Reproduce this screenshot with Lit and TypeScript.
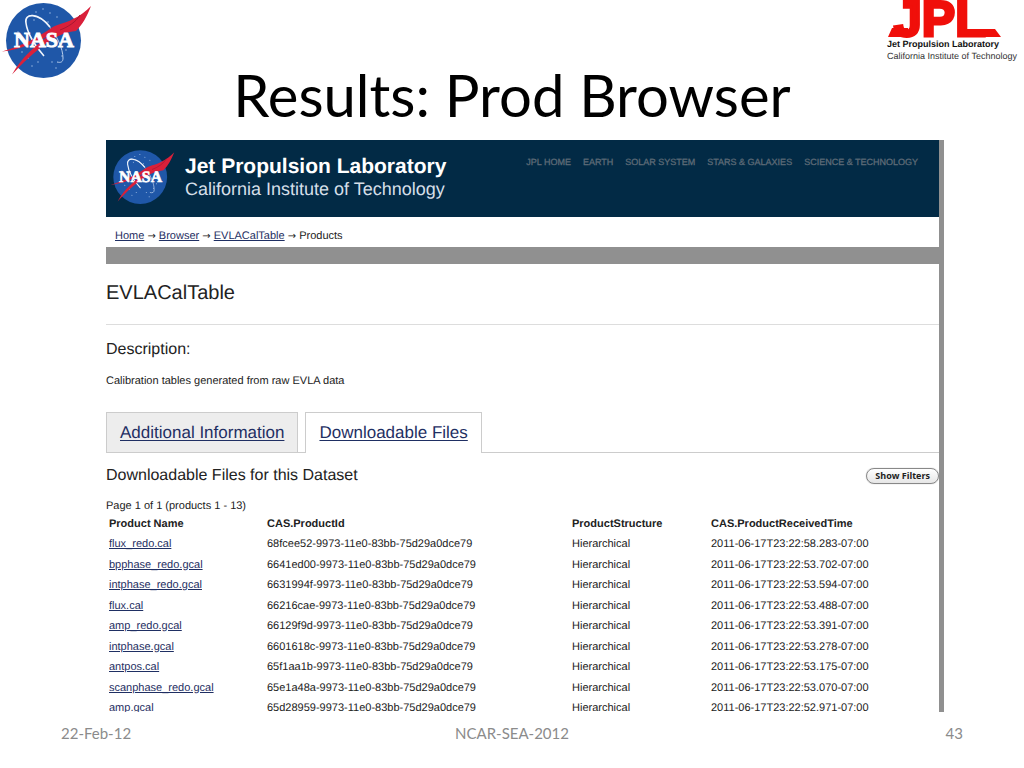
import { LitElement, html, css, svg } from "lit";
import { customElement, property } from "lit/decorators.js";

interface Product {
  name: string;
  id: string;
  time: string;
}

const PRODUCTS: Product[] = [
  { name: "flux_redo.cal", id: "68fcee52-9973-11e0-83bb-75d29a0dce79", time: "2011-06-17T23:22:58.283-07:00" },
  { name: "bpphase_redo.gcal", id: "6641ed00-9973-11e0-83bb-75d29a0dce79", time: "2011-06-17T23:22:53.702-07:00" },
  { name: "intphase_redo.gcal", id: "6631994f-9973-11e0-83bb-75d29a0dce79", time: "2011-06-17T23:22:53.594-07:00" },
  { name: "flux.cal", id: "66216cae-9973-11e0-83bb-75d29a0dce79", time: "2011-06-17T23:22:53.488-07:00" },
  { name: "amp_redo.gcal", id: "66129f9d-9973-11e0-83bb-75d29a0dce79", time: "2011-06-17T23:22:53.391-07:00" },
  { name: "intphase.gcal", id: "6601618c-9973-11e0-83bb-75d29a0dce79", time: "2011-06-17T23:22:53.278-07:00" },
  { name: "antpos.cal", id: "65f1aa1b-9973-11e0-83bb-75d29a0dce79", time: "2011-06-17T23:22:53.175-07:00" },
  { name: "scanphase_redo.gcal", id: "65e1a48a-9973-11e0-83bb-75d29a0dce79", time: "2011-06-17T23:22:53.070-07:00" },
  { name: "amp.gcal", id: "65d28959-9973-11e0-83bb-75d29a0dce79", time: "2011-06-17T23:22:52.971-07:00" },
];

const NAV = ["JPL HOME", "EARTH", "SOLAR SYSTEM", "STARS & GALAXIES", "SCIENCE & TECHNOLOGY"];

const STARS = [
  [36, 12], [43, 9], [50, 13], [57, 17], [34, 20], [61, 30], [48, 22], [28, 58],
  [22, 52], [32, 66], [38, 62], [52, 62], [62, 56], [66, 50], [56, 68], [18, 32],
];

@customElement("nasa-logo")
export class NasaLogo extends LitElement {
  static styles = css`
    :host {
      display: block;
      flex: none;
    }
    .mark {
      display: block;
      width: 100%;
      height: auto;
    }
    .word {
      font: bold 22px "Liberation Serif", serif;
    }
  `;

  render() {
    return html`<svg class="mark" viewBox="0 0 92 80" role="img" aria-label="NASA">
      <circle cx="43.500" cy="40.500" r="37.500" fill="#1f57a8" />
      ${STARS.map(([x, y]) => svg`<circle cx=${x} cy=${y} r="0.7" fill="#a9c4e8" />`)}
      <path
        d="M26 21c0-8 12-8 22 4 9 10 15 24 15 33 0 4-2 5-6 4"
        fill="none" stroke="#b9cfec" stroke-width="1"
      />
      <path d="M50 27C38 12 24 13 26 23c1 9 8 22 18 33" fill="none" stroke="#f0f5fc" stroke-width="1.600" />
      <path
        d="M2 51.500C22 46 38 37 50 29c6-5 14-5 23-10 7-3 13-8 18-13-4 10-8 18-15 25-10 1-20 5-29 12C35 51 23 63 12 74.500 21 58 37 44 50 35 36 43 18 50 2 51.500Z"
        fill="#d9203a"
      />
      <path d="M80 15C76 22 68 27 60 30" fill="none" stroke="#a81730" stroke-width="1" />
      <text class="word" x="44" y="47" text-anchor="middle" fill="#fff" stroke="#fff" stroke-width="0.900">NASA</text>
    </svg>`;
  }
}

@customElement("jpl-logo")
export class JplLogo extends LitElement {
  static styles = css`
    :host {
      display: block;
      width: 137px;
      color: #333;
      font: 9px/12px "Liberation Sans", Arial, sans-serif;
      text-rendering: geometricPrecision;
      white-space: nowrap;
    }
    .mark {
      display: block;
      overflow: visible;
      width: 137px;
      height: 38px;
    }
    .initials {
      font: bold 50px "Liberation Sans", Arial, sans-serif;
    }
    .lab {
      display: block;
      color: #111;
      font-weight: bold;
    }
  `;

  render() {
    return html`<svg class="mark" viewBox="0 0 137 38" role="img" aria-label="JPL">
        <text class="initials" x="7" y="36" fill="#f00f0a" stroke="#f00f0a" stroke-width="3">JPL</text>
        <path d="M5 28h16v9H1ZM92 29h16l6 8H92Z" fill="#f00f0a" />
      </svg>
      <span class="lab">Jet Propulsion Laboratory</span>
      <span>California Institute of Technology</span>`;
  }
}

@customElement("product-browser")
export class ProductBrowser extends LitElement {
  @property({ attribute: false }) products: Product[] = [];

  static styles = css`
    :host {
      display: block;
      overflow: hidden;
      background: #fff;
      border-right: 5px solid #909090;
      color: #222;
      font: 11px/16px "Liberation Sans", Arial, sans-serif;
      text-rendering: geometricPrecision;
    }
    a {
      color: #1f2f63;
    }
    .banner {
      display: flex;
      align-items: flex-start;
      gap: 10px;
      height: 77px;
      padding: 8px 21px 0 3px;
      box-sizing: border-box;
      background: #022a45;
    }
    .logo {
      width: 66px;
    }
    .org {
      flex: 1;
      padding-top: 8px;
      color: #d5dfe8;
      font-size: 18px;
      line-height: 22px;
      white-space: nowrap;
    }
    .org strong {
      display: block;
      color: #fff;
      font-size: 21px;
    }
    .nav {
      display: flex;
      gap: 12px;
      padding-top: 6px;
      white-space: nowrap;
    }
    .nav a {
      color: #5e6b77;
      font-size: 9px;
      text-decoration: none;
      -webkit-text-stroke: 0.3px #5e6b77;
    }
    .crumbs {
      padding: 11px 9px 3px;
      border-bottom: 17px solid #909090;
    }
    .arrow {
      font-family: "DejaVu Sans", sans-serif;
      font-size: 10px;
      line-height: 1;
    }
    h1,
    h2,
    p {
      margin: 0;
      font-weight: normal;
    }
    h1 {
      padding: 17px 0 19px;
      border-bottom: 1px solid #ddd;
      font-size: 20px;
      line-height: 24px;
    }
    h2 {
      font-size: 16px;
      line-height: 20px;
    }
    .description {
      padding: 15px 0 23px;
    }
    .description p {
      padding-top: 13px;
    }
    .tabs {
      display: flex;
      gap: 7px;
      border-bottom: 1px solid #ccc;
      font-size: 17px;
      line-height: 20px;
    }
    .tab {
      padding: 10px 13px 9px;
      border: 1px solid #ccc;
      border-bottom: 0;
      background: #ededed;
      text-underline-offset: 2px;
    }
    .tab.active {
      margin-bottom: -1px;
      padding-bottom: 10px;
      background: #fff;
    }
    .bar {
      display: flex;
      align-items: center;
      justify-content: space-between;
      padding: 13px 0 12px;
    }
    .filters {
      height: 16px;
      padding: 0 8px;
      border: 1px solid #888;
      border-radius: 8px;
      background: linear-gradient(#fff, #e6e6e6);
      box-shadow: 0 0 1px #999;
      color: #222;
      font: bold 9px/14px "Open Sans", sans-serif;
    }
    table {
      width: 100%;
      table-layout: fixed;
      border-collapse: collapse;
    }
    tr {
      height: 20px;
    }
    tbody tr:nth-child(even) {
      height: 21px;
    }
    th,
    td {
      padding: 0 3px;
      text-align: left;
      white-space: nowrap;
    }
    .name {
      width: 158px;
      box-sizing: border-box;
    }
    .id {
      width: 305px;
      box-sizing: border-box;
    }
    .structure {
      width: 139px;
      box-sizing: border-box;
    }
  `;

  render() {
    return html`
      <header class="banner">
        <nasa-logo class="logo"></nasa-logo>
        <div class="org"><strong>Jet Propulsion Laboratory</strong>California Institute of Technology</div>
        <nav class="nav">${NAV.map((n) => html`<a href="#">${n}</a>`)}</nav>
      </header>
      <nav class="crumbs" aria-label="Breadcrumb">
        <a href="#">Home</a> <span class="arrow">→</span> <a href="#">Browser</a>
        <span class="arrow">→</span> <a href="#">EVLACalTable</a> <span class="arrow">→</span> Products
      </nav>
      <h1>EVLACalTable</h1>
      <section class="description">
        <h2>Description:</h2>
        <p>Calibration tables generated from raw EVLA data</p>
      </section>
      <nav class="tabs">
        <a class="tab" href="#">Additional Information</a>
        <a class="tab active" href="#">Downloadable Files</a>
      </nav>
      <div class="bar">
        <h2>Downloadable Files for this Dataset</h2>
        <button class="filters" type="button">Show Filters</button>
      </div>
      <p>Page 1 of 1 (products 1 - 13)</p>
      <table>
        <thead>
          <tr>
            <th class="name">Product Name</th>
            <th class="id">CAS.ProductId</th>
            <th class="structure">ProductStructure</th>
            <th>CAS.ProductReceivedTime</th>
          </tr>
        </thead>
        <tbody>
          ${this.products.map(
            (p) => html`<tr>
              <td><a href="#">${p.name}</a></td>
              <td>${p.id}</td>
              <td>Hierarchical</td>
              <td>${p.time}</td>
            </tr>`
          )}
        </tbody>
      </table>
    `;
  }
}

@customElement("app-root")
export class AppRoot extends LitElement {
  static styles = css`
    :host {
      display: flex;
      flex-direction: column;
      height: 100vh;
      background: #fff;
      font-family: Lato, sans-serif;
    }
    .top {
      display: grid;
      grid-template-columns: 1fr auto 1fr;
      height: 140px;
      flex: none;
    }
    .nasa {
      width: 92px;
    }
    .jpl {
      justify-self: end;
    }
    .title {
      align-self: end;
      margin: 0;
      padding-bottom: 11px;
      color: #000;
      font-size: 58px;
      font-weight: normal;
      line-height: 68px;
      white-space: nowrap;
    }
    .browser {
      flex: 1;
      min-height: 0;
      margin: 0 80px 0 106px;
    }
    .foot {
      display: grid;
      grid-template-columns: 1fr auto 1fr;
      padding: 11px 61px 25px;
      color: #8b8b8b;
      font-size: 15px;
      line-height: 20px;
    }
    .page {
      text-align: right;
    }
  `;

  render() {
    return html`
      <header class="top">
        <nasa-logo class="nasa"></nasa-logo>
        <h1 class="title">Results: Prod Browser</h1>
        <jpl-logo class="jpl"></jpl-logo>
      </header>
      <product-browser class="browser" .products=${PRODUCTS}></product-browser>
      <footer class="foot">
        <span>22-Feb-12</span>
        <span>NCAR-SEA-2012</span>
        <span class="page">43</span>
      </footer>
    `;
  }
}
